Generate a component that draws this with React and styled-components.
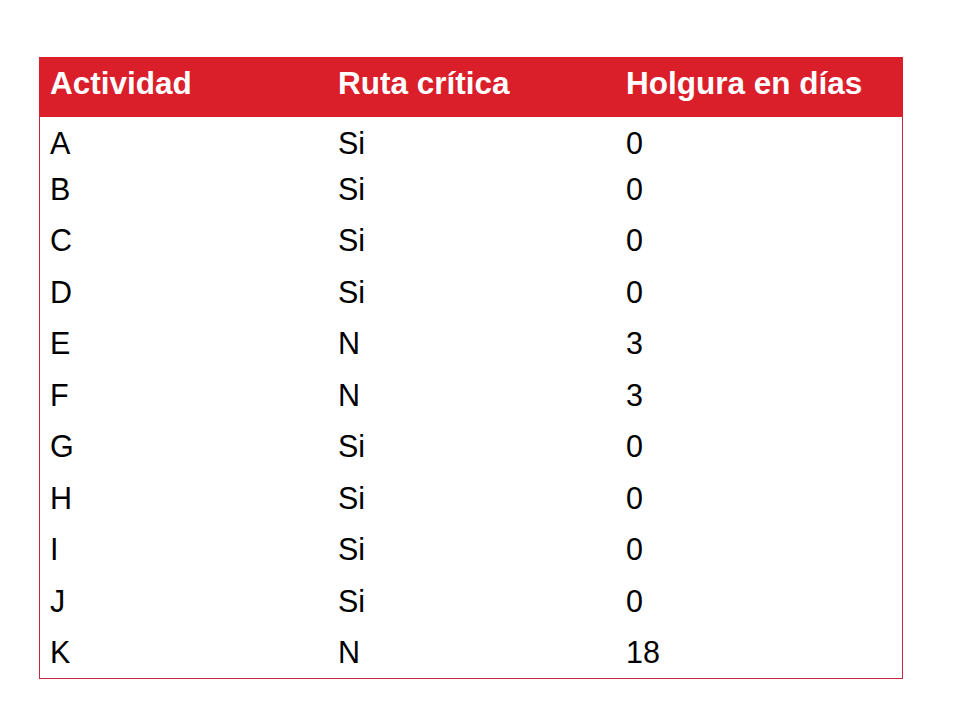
import React from 'react'
import styled, { createGlobalStyle } from 'styled-components'

const GlobalStyle = createGlobalStyle`
    html, body {
        margin: 0;
        padding: 0;
        background: #ffffff;
    }

    body {
        font-family: "Liberation Sans", Arial, sans-serif;
    }
`

const Page = styled.div`
    width: 960px;
    height: 720px;
    box-sizing: border-box;
    padding: 57px 57px 0px 39px;
`

const Table = styled.div`
    display: flex;
    flex-direction: column;
    width: 864px;
    box-sizing: border-box;
    border: 1px solid #c8283c;
    border-top: none;
`

const HeaderRow = styled.div`
    display: grid;
    grid-template-columns: 288px 288px 1fr;
    align-items: center;
    height: 60px;
    box-sizing: border-box;
    margin: 0px -1px;
    padding-bottom: 8px;
    background: #da1f2b;
    color: #ffffff;
    font-size: 31.5px;
    font-weight: bold;
`

const Row = styled.div`
    display: grid;
    grid-template-columns: 288px 288px 1fr;
    align-items: center;
    height: ${({ $first }) => ($first ? '46px' : '51.5px')};
    box-sizing: border-box;
    padding-top: ${({ $first }) => ($first ? '5px' : '0px')};
    color: #000000;
    font-size: 30.5px;
`

const Cell = styled.span`
    padding-left: 10px;
    line-height: 34px;
    white-space: nowrap;
`

const HeadCell = styled(Cell)`
    padding-left: 11px;
`

const rows = [
    ['A', 'Si', '0'],
    ['B', 'Si', '0'],
    ['C', 'Si', '0'],
    ['D', 'Si', '0'],
    ['E', 'N', '3'],
    ['F', 'N', '3'],
    ['G', 'Si', '0'],
    ['H', 'Si', '0'],
    ['I', 'Si', '0'],
    ['J', 'Si', '0'],
    ['K', 'N', '18'],
]

const App = () => (
    <Page>
        <GlobalStyle />
        <Table>
            <HeaderRow>
                <HeadCell>Actividad</HeadCell>
                <HeadCell>Ruta crítica</HeadCell>
                <HeadCell>Holgura en días</HeadCell>
            </HeaderRow>
            { rows.map((row, index) => (
                <Row key={ row[0] } $first={ index === 0 }>
                    { row.map((value, col) => <Cell key={ col }>{ value }</Cell>) }
                </Row>
            )) }
        </Table>
    </Page>
)

export default App
